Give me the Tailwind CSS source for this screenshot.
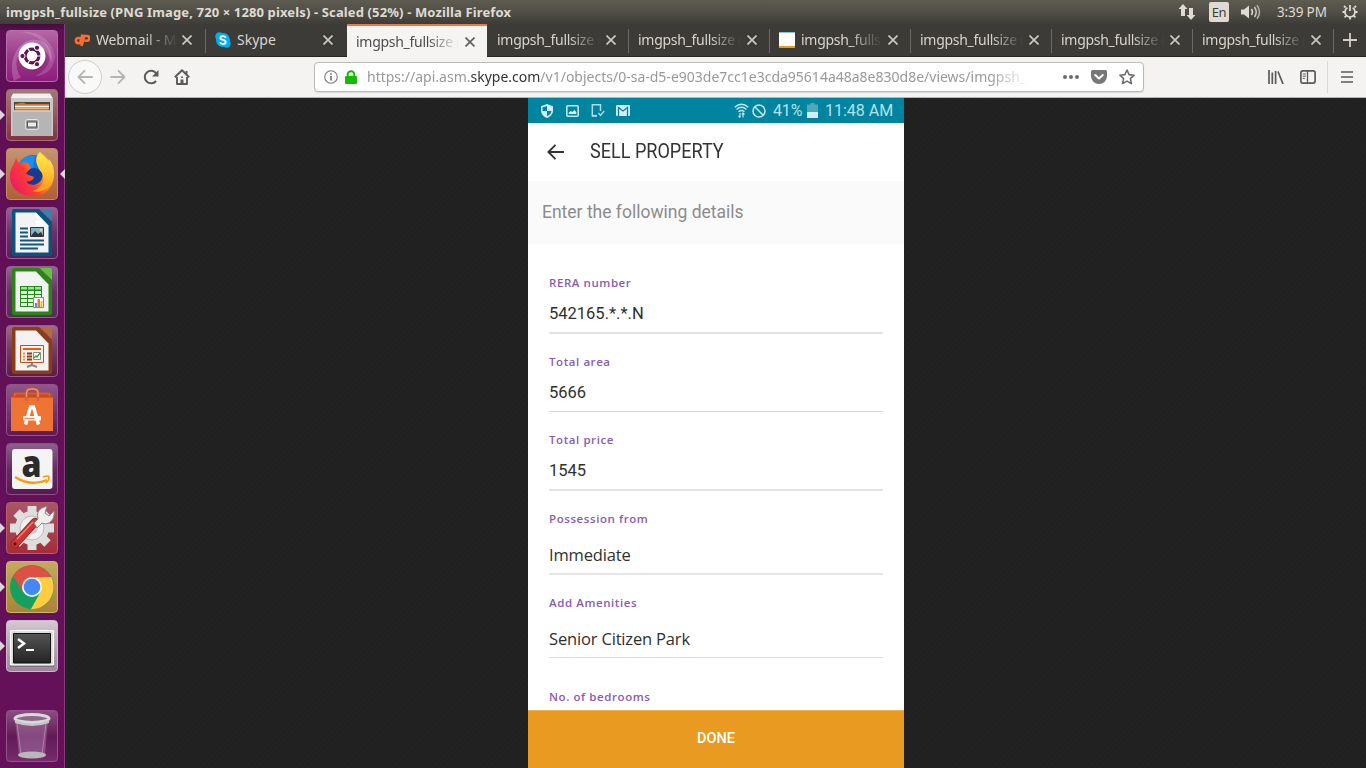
<!DOCTYPE html>
<html lang="en">
<head>
<meta charset="utf-8">
<title>imgpsh_fullsize</title>
<script src="https://cdn.jsdelivr.net/npm/@tailwindcss/browser@4"></script>
</head>
<body class="w-[1366px] h-[768px] overflow-hidden bg-[#222222] flex flex-col font-['Noto_Sans',sans-serif] select-none">

<!-- System panel -->
<header class="h-6 shrink-0 flex items-center justify-between bg-linear-to-b from-[#5e5b50] via-[#504e46] to-[#3d3c38] pl-1.5 pr-2 text-[#dfdbd2]">
  <div class="whitespace-nowrap text-[13px] font-bold leading-6"><span id="wt" class="inline-block origin-left tracking-[0.01em]">imgpsh_fullsize (PNG Image, 720 × 1280 pixels) - Scaled (52%) - Mozilla Firefox</span></div>
  <div class="flex items-center h-6">
    <svg class="w-[18px] h-4 mr-[13px]" viewBox="0 0 18 16" fill="#dfdbd2"><path d="M5 0 9.500 5H7v7H3V5H.500z"/><path d="M13 16l4.500-5H15V4h-4v7H8.500z"/></svg>
    <div class="w-5 h-5 rounded-xs bg-[#dfdbd2] text-[#3f3e39] text-[13px] leading-5 text-center tracking-tight">En</div>
    <svg class="w-5 h-4 ml-3 mr-4" viewBox="0 0 20 16"><path fill="#dfdbd2" d="M0 5.500h3L8 1.500v13L3 10.500H0z"/><g fill="none" stroke="#dfdbd2" stroke-width="1.500"><path d="M10.500 5q2 3 0 6"/><path d="M13.500 3q3.500 5 0 10" opacity=".9"/><path d="M16 1.200q5 6.800 0 13.600" opacity=".7"/></g></svg>
    <span class="text-[13.5px] leading-6 whitespace-nowrap w-[53px] tracking-[-0.01em]">3:39 PM</span>
    <svg class="w-4 h-4 ml-3" viewBox="0 0 16 16" fill="none" stroke="#dfdbd2"><path stroke-width="1.700" d="M5.300 3.800A5 5 0 1 0 10.700 3.800"/><path stroke-width="1.800" d="M8 1v6"/><path stroke-width="1.800" d="M3.500 3.500 2 2M12.500 3.500 14 2M3 8H.500M13 8h2.500M4.300 11.700 2.600 13.400M11.700 11.700l1.700 1.700M8 13v2.500"/></svg>
  </div>
</header>

<div class="flex flex-1 min-h-0">

<!-- Launcher -->
<nav class="w-[65px] shrink-0 bg-linear-to-b from-[#450b3e] via-[#5f0f55] via-[1%] to-[#651159] border-r border-[#82407a] flex flex-col gap-[7px] pt-1.5 pl-1.5">
  <div class="w-[52px] h-[52px] shrink-0 rounded-[4px] border border-[#b96bab] bg-linear-to-b from-[#b368a5] via-[#9c3a8c] to-[#8d1c7b]">
    <svg class="w-[50px] h-[50px]" viewBox="1 1 50 50"><g fill="#fff"><path opacity=".2" d="M8 51C2 34 9 13 25 10c16-2 23 12 20 22C41 17 29 13 22 16 10 22 7 36 15 47z"/><path opacity=".15" d="M14 2c18-2 32 8 35 24-1 12-8 20-20 20 13-6 18-17 12-28C35 8 25 3 14 2z"/></g><circle cx="26.500" cy="27" r="13.500" fill="#6a1459" opacity=".5"/><circle cx="26" cy="26" r="13.500" fill="#fff"/><circle cx="26" cy="26" r="6.900" fill="none" stroke="#5c1650" stroke-width="3.200"/><g stroke="#fff" stroke-width="1.200"><path d="M26 26h10M26 26l-5-9M26 26l-5 9" /></g><circle cx="26" cy="26" r="5" fill="#fff"/><g fill="#5c1650" stroke="#fff"><circle cx="16.500" cy="26" r="2.600"/><circle cx="31" cy="17.800" r="2.600"/><circle cx="31" cy="34.200" r="2.600"/></g></svg>
  </div>
  <div class="relative w-[52px] h-[52px] shrink-0 rounded-[4px] border border-[#a96a72] bg-linear-to-b from-[#a57878] to-[#813340]">
    <i class="absolute -left-[7px] top-5 border-y-[5px] border-y-transparent border-l-[5px] border-l-[#ddd5dc]"></i>
    <svg class="w-[50px] h-[50px]" viewBox="1 1 50 50"><path d="M8 5h36l3 8v34H5V13z" fill="#aaa"/><path d="M7 4.500h37l3 5H4.500z" fill="#f2f2f2"/><path d="M5 9.500h42V47H5z" fill="#c9c9c9"/><path d="M8 13h36v9H8z" fill="#4b4745"/><path d="M9 15l8-1.500 3 1.500h23v7H9z" fill="#d97129"/><path d="M9 17.500h34" stroke="#fff" stroke-width="1.500"/><path d="M9 19.500h34" stroke="#f1b477"/><path d="M6.500 21.500h39V47h-39z" fill="#b5b5b5"/><path d="M7 22h38" stroke="#ddd"/><rect x="19.500" y="30.500" width="13" height="10" rx="2" fill="#9a9a9a" stroke="#e5e5e5"/><rect x="21.500" y="33" width="9" height="5" fill="#eee" stroke="#555"/></svg>
  </div>
  <div class="relative w-[52px] h-[52px] shrink-0 rounded-[4px] border border-[#c58b60] bg-linear-to-b from-[#c39474] to-[#ae6035]">
    <i class="absolute -left-[7px] top-5 border-y-[5px] border-y-transparent border-l-[5px] border-l-[#ddd5dc]"></i>
    <i class="absolute left-[53px] top-5 border-y-[5px] border-y-transparent border-r-[5px] border-r-[#ddd5dc]"></i>
    <svg class="w-[50px] h-[50px]" viewBox="1 1 50 50"><defs><linearGradient id="fx" x1="0" x2="1" y1=".8" y2=".2"><stop stop-color="#e9176b"/><stop offset=".4" stop-color="#ff3d33"/><stop offset=".7" stop-color="#ff9a1c"/><stop offset="1" stop-color="#ffdc2e"/></linearGradient><linearGradient id="fy" x2="0" y2="1"><stop stop-color="#fff04a"/><stop offset="1" stop-color="#ff9a1e"/></linearGradient></defs><circle cx="27" cy="23" r="16" fill="#1276df"/><path d="M13 15q6-9 16-7l-2 12-12 2z" fill="#1690ee"/><circle cx="28" cy="29" r="9" fill="#183a91"/><path d="M10 10l3 6c3-2 7-2 9-1l3 5-5 5c2 3 5 2 8 4-1 6-9 3-7 6 9 5 18-2 15-12-3-6-5-5-6-10 0-5 2-8 4-9 6 4 14 13 14 22 0 14-9 22-22 22C13 48 4 39 4 29 4 19 8 18 10 10z" fill="url(#fx)"/><path d="M34 4c-7 8-2 16 2 21 4 8-1 16-10 18 12 3 22-5 22-18 0-8-3-11-5-14l-1 4C41 9 36 8 34 4z" fill="url(#fy)"/></svg>
  </div>
  <div class="w-[52px] h-[52px] shrink-0 rounded-[4px] border border-[#9a5c94] bg-linear-to-b from-[#94648f] via-[#683068] to-[#4f2358]">
    <svg class="w-[50px] h-[50px]" viewBox="1 1 50 50"><path d="M8 2h25l13 13v32q0 2-2 2H8q-2 0-2-2V4q0-2 2-2z" fill="#0d527f"/><path d="M34 2h10q2 0 2 2v10z" fill="#3b80aa"/><path d="M9.500 5.500h20.500l12.500 13v27h-33z" fill="#f3f3f3"/><path d="M30 6v12.500h12" fill="#fff" opacity=".7"/><g stroke="#135680" stroke-width="2"><path d="M14 21.500h8M14 25.500h8M14 29.500h8M14 33.500h24M14 37.500h24M14 41.500h18"/></g><path d="M24.500 20.500h13v9h-13z" fill="#7db4d2" stroke="#333"/><path d="M25 29l4-5 3 3 3-2 2 4z" fill="#333"/><circle cx="35" cy="23" r="1.500" fill="#ffd24d"/></svg>
  </div>
  <div class="w-[52px] h-[52px] shrink-0 rounded-[4px] border border-[#99608f] bg-linear-to-b from-[#8f6690] via-[#653161] to-[#523055]">
    <svg class="w-[50px] h-[50px]" viewBox="1 1 50 50"><path d="M8 2h25l13 13v32q0 2-2 2H8q-2 0-2-2V4q0-2 2-2z" fill="#2b8516"/><path d="M34 2h10q2 0 2 2v10z" fill="#5dc63e"/><path d="M9.500 5.500h20.500l12.500 13v27h-33z" fill="#f3f3f3"/><path d="M14 20h22v21H14z" fill="#208b16"/><g fill="#e4f8e3"><path d="M15 21h6v2.500h-6zM22 21h6v2.500h-6zM29 21h6v2.500h-6z" fill="#9be491"/><path d="M15 25h6v3h-6zM22 25h6v3h-6zM29 25h6v3h-6zM15 29h6v3h-6zM22 29h6v3h-6zM29 29h6v3h-6zM15 33h6v3h-6zM22 33h6v3h-6zM15 37h6v3h-6zM22 37h6v3h-6z"/></g><path d="M27.500 31.500h10v10h-10z" fill="#fff" stroke="#888"/><path d="M29 37h2v4h-2z" fill="#3d97d8"/><path d="M31.500 33h2.500v8h-2.500z" fill="#e47732"/><path d="M34.500 35h2v6h-2z" fill="#f8bd25"/></svg>
  </div>
  <div class="w-[52px] h-[52px] shrink-0 rounded-[4px] border border-[#9a5c88] bg-linear-to-b from-[#9a6a87] via-[#73385d] to-[#5b1d46]">
    <svg class="w-[50px] h-[50px]" viewBox="1 1 50 50"><path d="M8 2h25l13 13v32q0 2-2 2H8q-2 0-2-2V4q0-2 2-2z" fill="#8b3d16"/><path d="M34 2h10q2 0 2 2v10z" fill="#b56b3a"/><path d="M9.500 5.500h20.500l12.500 13v27h-33z" fill="#f3f3f3"/><path d="M26 37v3l-5 2M26 40l5 2" fill="none" stroke="#888" stroke-width="2"/><path d="M14.500 20.500h23v17h-23z" fill="#fcefe6" stroke="#b9531f" /><path d="M17 24h18" stroke="#d36227" stroke-width="2"/><path d="M17 28.500h2M17 31.500h2M17 34.500h2" stroke="#e49360" stroke-width="2"/><path d="M21 28.500h5M21 31.500h5M21 34.500h5" stroke="#8b3d16" stroke-width="2"/><path d="M27.500 27.500h7v7h-7z" fill="#fff" stroke="#888"/><path d="M28 33l2-2 1 1 3-4" fill="none" stroke="#31a52d" stroke-width="1.300"/></svg>
  </div>
  <div class="w-[52px] h-[52px] shrink-0 rounded-[4px] border border-[#91548b] bg-linear-to-b from-[#8d5787] to-[#5d1757]">
    <svg class="w-[50px] h-[50px]" viewBox="1 1 50 50"><path d="M8 8.500h36l3 5V47H5V13z" fill="#df5b24"/><path d="M5 13.500h42V47H5z" fill="#ee7434"/><path d="M5 13.500l3-5v5l3-3h31l2 3 1-5 2 5z" fill="#c64c20"/><path d="M20.500 17V9q0-4 4-4h3.500q4 0 4 4v8" fill="none" stroke="#d4623a" stroke-width="2.500"/><path d="M20.500 13V9q0-4 4-4h3.500q4 0 4 4v4" fill="none" stroke="#f3a17c"/><path d="M19.500 40.500 24.500 23h3l5 17.500" fill="none" stroke="#fff" stroke-width="3.500"/><rect x="17" y="32" width="18" height="4.500" rx="1" fill="#fff"/><path d="M18.500 34.300h10" stroke="#ee7434" stroke-width="1"/></svg>
  </div>
  <div class="w-[52px] h-[52px] shrink-0 rounded-[4px] border border-[#8c5087] bg-linear-to-b from-[#8d5f8b] via-[#642b62] to-[#591753]">
    <svg class="w-[50px] h-[50px]" viewBox="1 1 50 50"><rect x="6" y="6" width="40.500" height="40" rx="3" fill="#f4f4f4"/><text x="25.500" y="34" text-anchor="middle" font-family="Open Sans,sans-serif" font-weight="800" font-size="37" textLength="20" lengthAdjust="spacingAndGlyphs" fill="#2b2b2b">a</text><path d="M9 34q16 10 32 3" fill="none" stroke="#f90" stroke-width="2.200"/><path d="M37 34q6-2 6 0 .500 3-3 6" fill="none" stroke="#f90" stroke-width="1.600"/></svg>
  </div>
  <div class="relative w-[52px] h-[52px] shrink-0 rounded-[4px] border border-[#b85b6a] bg-linear-to-b from-[#a95567] to-[#a62c38]">
    <i class="absolute -left-[7px] top-5 border-y-[5px] border-y-transparent border-l-[5px] border-l-[#ddd5dc]"></i>
    <svg class="w-[50px] h-[50px]" viewBox="1 1 50 50"><g fill="#dedede"><circle cx="26" cy="26" r="17"/><g stroke="#dedede" stroke-width="9"><path d="M26 4v44M4 26h44M10.500 10.500l31 31M10.500 41.500l31-31"/></g></g><circle cx="26" cy="26" r="12" fill="#efefef" stroke="#bbb"/><circle cx="26" cy="26" r="6" fill="#ccc"/><path d="M9 42l20-22" stroke="#851f23" stroke-width="8.500" stroke-linecap="round"/><path d="M9 42l20-22" stroke="#d03534" stroke-width="7" stroke-linecap="round"/><path d="M11 37l16-17" stroke="#e8807d" stroke-width="1.500"/><circle cx="9" cy="42" r="1.700" fill="#611"/><path d="M28 21l4-4q-2-8 4-11l5-2-2 7 4 3 5-5q1 8-5 12-4 2-7 0l-5 5z" fill="#eee" stroke="#888"/></svg>
  </div>
  <div class="relative w-[52px] h-[52px] shrink-0 rounded-[4px] border border-[#ceb56f] bg-linear-to-b from-[#c6a95f] to-[#a78537]">
    <i class="absolute -left-[7px] top-5 border-y-[5px] border-y-transparent border-l-[5px] border-l-[#ddd5dc]"></i>
    <svg class="w-[50px] h-[50px]" viewBox="1 1 50 50"><circle cx="26" cy="26" r="22" fill="#15a05d"/><path d="M7 15A22 22 0 0 1 45.200 16H26L17 31z" fill="#dd5145"/><path d="M45.200 16A22 22 0 0 1 25 48l9.500-17L30 16z" fill="#ffcd42"/><circle cx="26" cy="26" r="10" fill="#f5f5f5"/><circle cx="26" cy="26" r="8.300" fill="#4587f3"/></svg>
  </div>
  <div class="relative w-[52px] h-[52px] shrink-0 rounded-[4px] border border-[#cbbaca] bg-linear-to-b from-[#d3c8d2] to-[#9d869b]">
    <i class="absolute -left-[7px] top-5 border-y-[5px] border-y-transparent border-l-[5px] border-l-[#ddd5dc]"></i>
    <svg class="w-[50px] h-[50px]" viewBox="1 1 50 50"><defs><linearGradient id="tm" x2="0" y2="1"><stop stop-color="#555"/><stop offset="1" stop-color="#242424"/></linearGradient></defs><path d="M4 10h44v37H4z" fill="#777"/><path d="M4.500 10.500h43V45h-43z" fill="#dedede" stroke="#fff"/><path d="M7.500 13.500h37V43h-37z" fill="url(#tm)" stroke="#111"/><path d="M12 19l6 4.500-6 4.500" fill="none" stroke="#fff" stroke-width="2.500"/><path d="M20 30h8" stroke="#fff" stroke-width="2"/></svg>
  </div>
  <div class="w-[52px] h-[52px] shrink-0 rounded-[4px] border border-[#92528b] bg-linear-to-b from-[#8b4d84] via-[#641857] to-[#752c6d] mt-[31px]">
    <svg class="w-[50px] h-[50px]" viewBox="1 1 50 50"><path d="M9 9h33l-3 36H13z" fill="#a877a8" opacity=".5"/><path d="M11 13l4 31M40 13l-4 31" stroke="#c9a5c7" stroke-width="1" opacity=".6"/><ellipse cx="26" cy="45" rx="14" ry="3.500" fill="#b9b9b9"/><ellipse cx="26" cy="8.500" rx="17" ry="4" fill="#8d6989" stroke="#d9d9d9" stroke-width="3"/><path d="M9 10q17 7 34 0v3q-17 6-34 0z" fill="#c7c7c7"/></svg>
  </div>
</nav>

<!-- Browser window -->
<section class="flex-1 min-w-0 flex flex-col">

  <!-- Tabs -->
  <div class="h-[33px] shrink-0 flex bg-[#3c3b37] border-b border-[#262522] text-[#d9d5cc] text-[14px] leading-8">
    <div class="w-[141px] flex items-center pl-[9px] pr-3.5 relative">
      <svg class="w-4 h-3.5 mr-1.5 shrink-0" viewBox="0 0 16 14" fill="none" stroke="#ff6c2c" stroke-width="2.600"><path d="M6.500 5H4.500a2.600 2.600 0 0 0 0 5.200H6L8.500 1.500"/><path d="M7.500 13 10.300 3H13a2.300 2.300 0 0 1 0 4.700H10.500"/></svg>
      <span class="flex-1 overflow-hidden whitespace-nowrap mask-r-from-60% mask-r-to-100% tracking-[-0.01em]">Webmail - Main</span>
      <svg class="w-2.5 h-2.5 ml-1 shrink-0" viewBox="0 0 10 10" stroke="#cfcbc2" stroke-width="1.600"><path d="M.500.500l9 9M9.500.500l-9 9"/></svg>
      <i class="absolute right-0 top-[5px] h-6 w-px bg-[#6b6963]"></i>
    </div>
    <div class="w-[141px] flex items-center pl-[9px] pr-3.5">
      <svg class="w-4 h-4 mr-1.5 shrink-0" viewBox="0 0 16 16"><circle cx="8" cy="8" r="7" fill="#00aff0"/><circle cx="4.500" cy="4.500" r="4.200" fill="#00aff0"/><circle cx="11.500" cy="11.500" r="4.200" fill="#00aff0"/><path d="M10.700 5.700C10 3.500 5.400 3.500 5.400 6c0 2.500 5.300 1.400 5.300 4 0 2.600-5 2.500-5.700.200" fill="none" stroke="#fff" stroke-width="1.900"/></svg>
      <span class="flex-1 overflow-hidden whitespace-nowrap">Skype</span>
      <svg class="w-2.5 h-2.5 ml-1 shrink-0" viewBox="0 0 10 10" stroke="#cfcbc2" stroke-width="1.600"><path d="M.500.500l9 9M9.500.500l-9 9"/></svg>
    </div>
    <div class="w-[140px] mr-px h-[33px] flex items-center pl-[9px] pr-3 bg-[#f5f4f2] border-t-2 border-[#f07746] text-[#4c4c4c] leading-[30px]">
      <span class="flex-1 overflow-hidden whitespace-nowrap mask-r-from-70% mask-r-to-100% tracking-[-0.02em]">imgpsh_fullsize (PNG</span>
      <svg class="w-2.5 h-2.5 ml-1.5 shrink-0" viewBox="0 0 10 10" stroke="#5c5c5a" stroke-width="1.600"><path d="M.500.500l9 9M9.500.500l-9 9"/></svg>
    </div>
    <div class="w-[141px] flex items-center pl-[9px] pr-[13px] relative">
      <span class="flex-1 overflow-hidden whitespace-nowrap mask-r-from-70% mask-r-to-100% tracking-[-0.02em]">imgpsh_fullsize (PNG</span>
      <svg class="w-2.5 h-2.5 ml-1.5 shrink-0" viewBox="0 0 10 10" stroke="#cfcbc2" stroke-width="1.600"><path d="M.500.500l9 9M9.500.500l-9 9"/></svg>
      <i class="absolute right-0 top-[5px] h-6 w-px bg-[#6b6963]"></i>
    </div>
    <div class="w-[141px] flex items-center pl-[9px] pr-[13px] relative">
      <span class="flex-1 overflow-hidden whitespace-nowrap mask-r-from-70% mask-r-to-100% tracking-[-0.02em]">imgpsh_fullsize (PNG</span>
      <svg class="w-2.5 h-2.5 ml-1.5 shrink-0" viewBox="0 0 10 10" stroke="#cfcbc2" stroke-width="1.600"><path d="M.500.500l9 9M9.500.500l-9 9"/></svg>
      <i class="absolute right-0 top-[5px] h-6 w-px bg-[#6b6963]"></i>
    </div>
    <div class="w-[141px] flex items-center pl-[9px] pr-[13px] relative">
      <span class="w-4 h-4 mr-1.5 shrink-0 bg-white border-b-2 border-b-[#e89a21] border-t border-t-[#8fc4cf]"></span>
      <span class="flex-1 overflow-hidden whitespace-nowrap mask-r-from-60% mask-r-to-100% tracking-[-0.02em]">imgpsh_fullsize (PNG</span>
      <svg class="w-2.5 h-2.5 ml-1.5 shrink-0" viewBox="0 0 10 10" stroke="#cfcbc2" stroke-width="1.600"><path d="M.500.500l9 9M9.500.500l-9 9"/></svg>
      <i class="absolute right-0 top-[5px] h-6 w-px bg-[#6b6963]"></i>
    </div>
    <div class="w-[141px] flex items-center pl-[9px] pr-[13px] relative">
      <span class="flex-1 overflow-hidden whitespace-nowrap mask-r-from-70% mask-r-to-100% tracking-[-0.02em]">imgpsh_fullsize (PNG</span>
      <svg class="w-2.5 h-2.5 ml-1.5 shrink-0" viewBox="0 0 10 10" stroke="#cfcbc2" stroke-width="1.600"><path d="M.500.500l9 9M9.500.500l-9 9"/></svg>
      <i class="absolute right-0 top-[5px] h-6 w-px bg-[#6b6963]"></i>
    </div>
    <div class="w-[141px] flex items-center pl-[9px] pr-[13px] relative">
      <span class="flex-1 overflow-hidden whitespace-nowrap mask-r-from-70% mask-r-to-100% tracking-[-0.02em]">imgpsh_fullsize (PNG</span>
      <svg class="w-2.5 h-2.5 ml-1.5 shrink-0" viewBox="0 0 10 10" stroke="#cfcbc2" stroke-width="1.600"><path d="M.500.500l9 9M9.500.500l-9 9"/></svg>
      <i class="absolute right-0 top-[5px] h-6 w-px bg-[#6b6963]"></i>
    </div>
    <div class="w-[141px] flex items-center pl-[9px] pr-[13px] relative">
      <span class="flex-1 overflow-hidden whitespace-nowrap mask-r-from-70% mask-r-to-100% tracking-[-0.02em]">imgpsh_fullsize (PNG</span>
      <svg class="w-2.5 h-2.5 ml-1.5 shrink-0" viewBox="0 0 10 10" stroke="#cfcbc2" stroke-width="1.600"><path d="M.500.500l9 9M9.500.500l-9 9"/></svg>
      <i class="absolute right-0 top-[5px] h-6 w-px bg-[#6b6963]"></i>
    </div>
    <div class="flex-1 flex items-center pl-[9px]">
      <svg class="w-3.5 h-3.5" viewBox="0 0 14 14" stroke="#d4d0c7" stroke-width="1.800"><path d="M7 0v14M0 7h14"/></svg>
    </div>
  </div>

  <!-- Navigation toolbar -->
  <div class="h-[41px] shrink-0 flex items-center bg-[#f4f3f2] border-b border-[#b8b5b2] pl-[3px]">
    <div class="w-[34px] h-[34px] rounded-full border border-[#d0cfce] bg-[#f9f9f8] flex items-center justify-center">
      <svg class="w-4 h-4" viewBox="0 0 16 16" fill="none" stroke="#b4b4b3" stroke-width="1.800" stroke-linecap="round" stroke-linejoin="round"><path d="M15 8H1.500M7.500 1.800 1.500 8l6 6.200"/></svg>
    </div>
    <svg class="w-4 h-4 ml-2" viewBox="0 0 16 16" fill="none" stroke="#b4b4b3" stroke-width="1.800" stroke-linecap="round" stroke-linejoin="round"><path d="M1 8h13.500M8.500 1.800l6 6.200-6 6.200"/></svg>
    <svg class="w-4 h-4 ml-[17px]" viewBox="0 0 16 16"><path d="M13 12A6.300 6.300 0 1 1 13.300 4.500" fill="none" stroke="#5b5b5a" stroke-width="2"/><path d="M15.500 1v6.500H9z" fill="#5b5b5a"/></svg>
    <svg class="w-4 h-4 ml-[15px]" viewBox="0 0 16 16" fill="none" stroke="#5b5b5a" stroke-width="1.900" stroke-linejoin="round"><path d="M.800 8.200 8 1.200l7.200 7"/><path d="M3 8v7h10V8M12.500 2v3"/><path d="M8 15v-4.500" stroke-width="3"/><path d="M8 7.500v1.500"/></svg>

    <div class="ml-[124px] w-[830px] h-[30px] rounded-[4px] border border-[#bcb9b6] bg-white shadow-[0_1px_1px_#dddbd9] flex items-center">
      <svg class="w-3.5 h-3.5 ml-[9px]" viewBox="0 0 14 14" fill="none" stroke="#777"><circle cx="7" cy="7" r="6.300" stroke-width="1.100"/><path stroke-width="1.700" d="M7 6v4.500M7 3.300v1.500"/></svg>
      <svg class="w-3 h-3.5 ml-[7px]" viewBox="0 0 12 14"><rect y="6" width="12" height="8" rx="1.200" fill="#12bc00"/><path d="M2.700 7V4.500a3.300 3.300 0 0 1 6.600 0V7" fill="none" stroke="#12bc00" stroke-width="2"/></svg>
      <div class="ml-2.5 w-[662px] overflow-hidden whitespace-nowrap text-[14px] leading-7 text-[#999] mask-r-from-94% mask-r-to-100%"><span class="inline-block">https://api.asm.<span class="text-[#333]">skype.com</span>/v1/objects/0-sa-d5-e903de7cc1e3cda95614a48a8e830d8e/views/imgpsh_fullsize</span></div>
      <svg class="w-4 h-1 ml-[34px]" viewBox="0 0 16 4" fill="#6c6c6c"><circle cx="2" cy="2" r="2"/><circle cx="8" cy="2" r="2"/><circle cx="14" cy="2" r="2"/></svg>
      <svg class="w-4 h-3.5 ml-3" viewBox="0 0 16 14"><path d="M1.500 0h13Q16 0 16 1.500V6a8 8 0 0 1-16 0V1.500Q0 0 1.500 0z" fill="#777"/><path d="M4.200 5 8 8.600 11.800 5" fill="none" stroke="#fff" stroke-width="2" stroke-linecap="round" stroke-linejoin="round"/></svg>
      <svg class="w-4 h-4 ml-3" viewBox="0 0 16 16" fill="none" stroke="#6c6c6c" stroke-width="1.600" stroke-linejoin="round"><path d="M8 1l2.100 4.600 5 .600-3.700 3.400 1 5L8 12.100l-4.400 2.500 1-5L.900 6.200l5-.600z"/></svg>
    </div>

    <svg class="w-4 h-3.5 ml-[124px]" viewBox="0 0 16 14" stroke="#5b5b5a" stroke-width="1.700"><path d="M1 0v14M4.300 2.500V14M7.600 1v13M10 1.500 15 14"/></svg>
    <svg class="w-4 h-3.5 ml-4" viewBox="0 0 16 14" fill="none" stroke="#5b5b5a" stroke-width="1.700"><rect x=".900" y=".900" width="14.200" height="12.200" rx="2"/><path d="M7.500 1v12" stroke-width="1.300"/><path d="M2.800 4h3M2.800 6.200h3M2.800 8.400h2" stroke-width="1"/></svg>
    <i class="w-px h-8 bg-[#dad8d6] ml-[11px]"></i>
    <svg class="w-3 h-3 ml-[13px]" viewBox="0 0 12 12" stroke="#5b5b5a" stroke-width="1.700"><path d="M0 1h12M0 6h12M0 11h12"/></svg>
  </div>

  <!-- Image viewer -->
  <main class="flex-1 min-h-0 flex pl-[463px] bg-[repeating-linear-gradient(135deg,#222222_0_2px,#202020_2px_4px)]">
    <div class="w-[376px] h-full bg-white flex flex-col font-[Roboto,sans-serif]">

      <div class="h-[25px] shrink-0 bg-[#00849f] flex items-center pl-3 pr-[9px] text-[#b9e0e8]">
        <svg class="w-3.5 h-3.5" viewBox="0 0 14 14"><path d="M7 0l6 2.300v4.200c0 3.500-2.500 6.300-6 7.500-3.500-1.200-6-4-6-7.500V2.300z" fill="#d4edf2"/><path d="M7 2v5H2.500V3.500zM7 7h4.500C11.200 9.500 9.500 11.200 7 12.300z" fill="#00849f"/></svg>
        <svg class="w-[13px] h-3 ml-3" viewBox="0 0 13 12"><rect x=".800" y=".800" width="11.400" height="10.400" rx="1" fill="none" stroke="#c4e5ec" stroke-width="1.600"/><path d="M2.800 9V7.500l2-1.500 1.500 1 2-2 2 2V9z" fill="#d4edf2"/></svg>
        <svg class="w-3.5 h-[13px] ml-3" viewBox="0 0 14 13" fill="none" stroke="#b0dae3"><path d="M9.500 7V.800H1.300v11h4" stroke-width="1.500"/><path d="M1 11.800h5" stroke-width="1.800"/><path d="M7.500 9l2 2.500L13.200 7" stroke-width="1.400"/></svg>
        <svg class="w-3.5 h-[11px] ml-[11px]" viewBox="0 0 14 11"><rect width="14" height="11" rx="1" fill="#d4edf2"/><path d="M2.500 11V2.500L7 6l4.500-3.500V11" fill="none" stroke="#00849f" stroke-width="1.300"/></svg>
        <div class="flex-1"></div>
        <svg class="w-[15px] h-[15px]" viewBox="0 0 15 15" fill="none" stroke="#c4e5ec" stroke-width="1.400"><path d="M.700 4.300q6.800-6 13.600 0M2.500 6.500q5-4.300 10 0M4.500 8.700q3-2.500 6 0"/><path d="M6 10v4.500M4.500 13 6 14.500M9 14.500V10M7.800 11.500 9 10l1.500 1.500" stroke-width="1.200"/></svg>
        <svg class="w-3.5 h-3.5 ml-[3px]" viewBox="0 0 14 14" fill="none" stroke="#c4e5ec" stroke-width="1.600"><circle cx="7" cy="7" r="6"/><path d="M2.800 2.800l8.400 8.400"/></svg>
        <span class="ml-[7px] w-[31px] text-[16px] tracking-[-0.01em] whitespace-nowrap">41%</span>
        <svg class="w-[11px] h-[15px] ml-[3px]" viewBox="0 0 11 15"><path d="M3.500 0h4v1.500H11V9H0V1.500h3.500z" fill="#4da9bc"/><path d="M0 9h11v6H0z" fill="#d4edf2"/></svg>
        <span class="ml-[7px] w-[70px] text-[16px] whitespace-nowrap">11:48 AM</span>
      </div>

      <div class="h-[58px] shrink-0 flex items-center pl-[19px]">
        <svg class="w-[17px] h-4" viewBox="0 0 17 16" fill="none" stroke="#333" stroke-width="1.900"><path d="M17 8H1.500M8.500.800 1.400 8l7.100 7.200"/></svg>
        <span class="ml-[26px] text-[21px] text-[#333] whitespace-nowrap origin-left scale-x-[0.86]">SELL PROPERTY</span>
      </div>

      <div class="h-[63px] shrink-0 flex items-center pl-3.5 bg-[#fafafa] text-[17.5px] text-[#8c8c8c]"><span class="whitespace-nowrap">Enter the following details</span></div>

      <form class="flex-1 min-h-0 overflow-hidden px-[21px] pt-7 text-[#2f2f2f]">
        <div class="h-[62px] border-b-2 border-[#e2e2e2]">
          <div class="h-[22px] leading-[22px] font-['Open_Sans',sans-serif] font-semibold text-[11.5px] tracking-[0.05em] text-[#8a5cb0]">RERA number</div>
          <div class="h-[38px] leading-10 text-[16.500px]">542165.*.*.N</div>
        </div>
        <div class="h-[61px] mt-[17px] border-b border-[#d3d6d6]">
          <div class="h-[22px] leading-[22px] font-['Open_Sans',sans-serif] font-semibold text-[11.5px] tracking-[0.05em] text-[#8a5cb0]">Total area</div>
          <div class="h-[38px] leading-10 text-[16.500px]">5666</div>
        </div>
        <div class="h-[62px] mt-[17px] border-b-2 border-[#e2e2e2]">
          <div class="h-[22px] leading-[22px] font-['Open_Sans',sans-serif] font-semibold text-[11.5px] tracking-[0.05em] text-[#8a5cb0]">Total price</div>
          <div class="h-[38px] leading-10 text-[16.500px]">1545</div>
        </div>
        <div class="h-[67px] mt-[17px] border-b-2 border-[#e6e6e6]">
          <div class="h-[22px] leading-[22px] font-['Open_Sans',sans-serif] font-semibold text-[11.5px] tracking-[0.05em] text-[#8a5cb0]">Possession from</div>
          <div class="h-[43px] leading-[49px] font-['Open_Sans',sans-serif] text-[16.500px] tracking-[-0.01em]">Immediate</div>
        </div>
        <div class="h-[66px] mt-[17px] border-b border-[#dcdcdc]">
          <div class="h-[22px] leading-[22px] font-['Open_Sans',sans-serif] font-semibold text-[11.5px] tracking-[0.05em] text-[#8a5cb0]">Add Amenities</div>
          <div class="h-[43px] leading-[49px] font-['Open_Sans',sans-serif] text-[16.500px] tracking-[-0.01em]">Senior Citizen Park</div>
        </div>
        <div class="mt-7">
          <div class="h-[22px] leading-[22px] font-['Open_Sans',sans-serif] font-semibold text-[11.5px] tracking-[0.05em] text-[#8a5cb0]">No. of bedrooms</div>
        </div>
      </form>

      <button type="button" class="h-[58px] shrink-0 bg-[#e89a21] border-t border-[#ecaf50] text-white text-[14.5px] font-medium pb-0.5">DONE</button>
    </div>
  </main>
</section>
</div>
</body>
</html>
